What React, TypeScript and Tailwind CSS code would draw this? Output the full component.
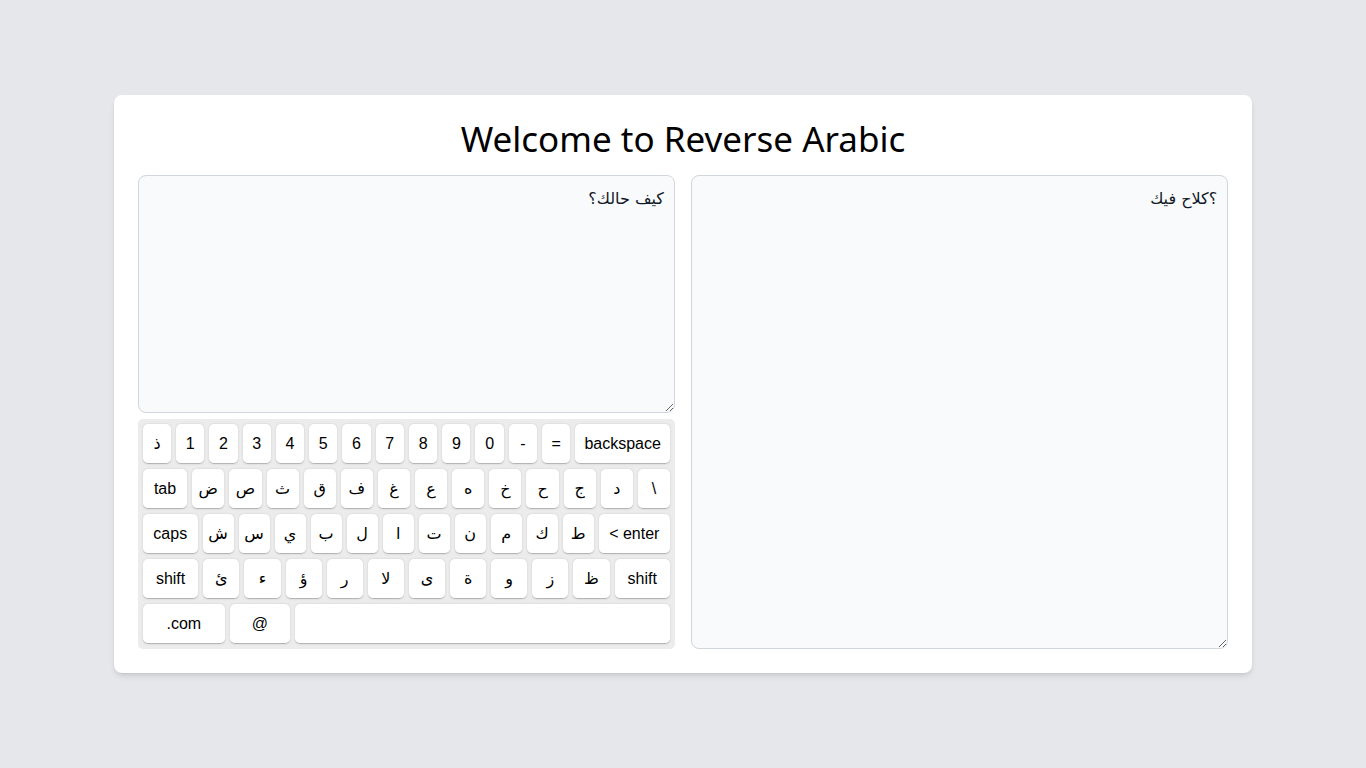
import React, { useState } from "react";

type K = { label: string; fn?: boolean; w?: string };

const s = (chars: string[]): K[] => chars.map((c) => ({ label: c }));

const rows: K[][] = [
  [...s(["ذ", "1", "2", "3", "4", "5", "6", "7", "8", "9", "0", "-", "="]), { label: "backspace", fn: true }],
  [{ label: "tab", fn: true }, ...s(["ض", "ص", "ث", "ق", "ف", "غ", "ع", "ه", "خ", "ح", "ج", "د", "\\"])],
  [{ label: "caps", fn: true }, ...s(["ش", "س", "ي", "ب", "ل", "ا", "ت", "ن", "م", "ك", "ط"]), { label: "< enter", fn: true }],
  [{ label: "shift", fn: true }, ...s(["ئ", "ء", "ؤ", "ر", "لا", "ى", "ة", "و", "ز", "ظ"]), { label: "shift", fn: true }],
  [{ label: ".com", w: "w-[82px] shrink-0 grow-0" }, { label: "@", w: "w-[60px] shrink-0 grow-0" }, { label: "\u00a0", fn: true }],
];

function Key({ k }: { k: K }) {
  const base =
    "h-10 rounded-[5px] bg-white p-[5px] border-b border-[#b5b5b5] shadow-[0_0_3px_-1px_rgba(0,0,0,0.3)] flex items-center justify-center text-base text-black";
  const size = k.w ? k.w : k.fn ? "grow" : "w-5 grow";
  return (
    <div className={`${base} ${size}`}>
      <span>{k.label}</span>
    </div>
  );
}

export default function App() {
  const [left, setLeft] = useState("كيف حالك؟");
  const right = "؟كلاح فيك";
  const ta =
    "block w-full px-2.5 pt-[11px] pb-2.5 bg-gray-50 border border-gray-300 rounded-lg text-base text-gray-900 outline-none text-right [unicode-bidi:plaintext]";
  return (
    <div className="min-h-screen bg-gray-200 flex items-center justify-center">
      <div className="w-5/6 bg-white rounded-lg shadow-md p-6">
        <h1
          className="text-[35px] leading-10 text-center mb-4 text-black"
          style={{ fontFamily: '"Noto Sans", "Open Sans", sans-serif' }}
        >
          Welcome to Reverse Arabic
        </h1>
        <div className="grid grid-cols-2 gap-4">
          <div className="flex flex-col gap-[6px]">
            <textarea
              value={left}
              onChange={(e) => setLeft(e.target.value)}
              className={`${ta} h-[238px]`}
              style={{ fontFamily: '"DejaVu Sans", sans-serif' }}
            />
            <div
              className="bg-[#ececec] p-[5px] rounded-[5px] flex flex-col gap-[5px]"
              style={{ fontFamily: '"Liberation Sans", Arial, "DejaVu Sans", sans-serif' }}
            >
              {rows.map((r, i) => (
                <div key={i} className="flex gap-[5px]">
                  {r.map((k, j) => (
                    <Key key={j} k={k} />
                  ))}
                </div>
              ))}
            </div>
          </div>
          <textarea
            readOnly
            value={right}
            className={`${ta} h-full`}
            style={{ fontFamily: '"DejaVu Sans", sans-serif' }}
          />
        </div>
      </div>
    </div>
  );
}
